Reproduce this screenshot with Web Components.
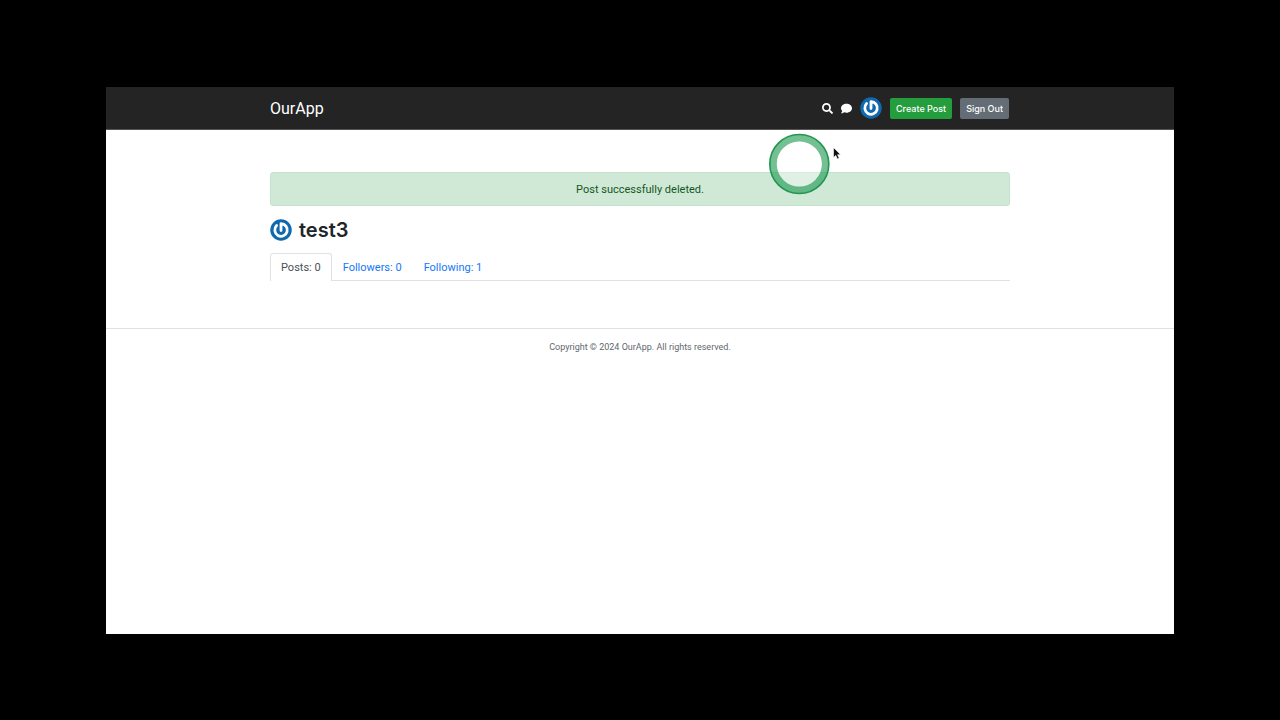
<!DOCTYPE html>
<html lang="en">
<head>
<meta charset="utf-8">
<meta name="viewport" content="width=device-width, initial-scale=1">
<title>OurApp</title>
<style>
  html { background: #000; }
  body {
    margin: 0; box-sizing: border-box; min-height: 100vh; padding: 87px 106px 86px;
    display: flex; flex-direction: column; background: #000; color: #212529;
    font: 11px/16px Roboto, "Liberation Sans", sans-serif;
  }
</style>
</head>
<body>
<our-app></our-app>
<script>
const define = (name, html) => {
  const template = document.createElement('template');
  template.innerHTML = html;
  customElements.define(name, class extends HTMLElement {
    constructor() {
      super();
      this.attachShadow({ mode: 'open' }).append(template.content.cloneNode(true));
    }
  });
};

define('user-avatar', `
  <style>
    :host { display: block; width: 22px; height: 22px; flex: none; }
    svg { display: block; width: 100%; height: 100%; }
  </style>
  <svg viewBox="0 0 44 44" aria-hidden="true">
    <circle cx="22" cy="22" r="21.5" fill="#0f69ae"/>
    <path d="M22 23V9.500A12.500 12.500 0 1 1 13.200 13.200" fill="none" stroke="#fff" stroke-width="5.600" stroke-linecap="round" stroke-linejoin="round"/>
  </svg>`);

define('app-header', `
  <style>
    :host { display: block; background: #242424; border-bottom: 1px solid #555; }
    .bar {
      max-width: 740px; height: 42px; margin: 0 auto;
      display: flex; align-items: center; justify-content: space-between;
    }
    a { color: #fff; text-decoration: none; }
    .brand { font-size: 16px; line-height: 24px; padding-top: 1px; }
    nav { display: flex; align-items: center; gap: 8px; padding-right: 1px; }
    svg { display: block; width: 11px; height: 11px; fill: #fff; }
    button {
      font: 500 9px/13px Inter, "Liberation Sans", sans-serif; color: #fff;
      height: 21px; padding: 0 6px; border: 0; border-radius: 2px;
    }
    .create { background: #249d3d; }
    .out { background: #646d75; }
  </style>
  <div class="bar">
    <a class="brand" href="#">OurApp</a>
    <nav>
      <a href="#" aria-label="Search"><svg viewBox="0 0 512 512"><path d="M505 442.7L405.3 343c-4.5-4.5-10.6-7-17-7H372c27.6-35.3 44-79.7 44-128C416 93.1 322.9 0 208 0S0 93.1 0 208s93.1 208 208 208c48.3 0 92.7-16.4 128-44v16.3c0 6.4 2.5 12.5 7 17l99.7 99.7c9.4 9.4 24.6 9.4 33.9 0l28.3-28.3c9.4-9.4 9.4-24.6.1-34zM208 336c-70.7 0-128-57.2-128-128 0-70.7 57.2-128 128-128 70.7 0 128 57.2 128 128 0 70.7-57.2 128-128 128z"/></svg></a>
      <a href="#" aria-label="Chat"><svg viewBox="0 0 512 512"><path d="M256 32C114.6 32 0 125.1 0 240c0 49.6 21.4 95 57 130.7C44.5 421.1 2.7 466 2.2 466.5c-2.2 2.3-2.8 5.7-1.5 8.7S4.8 480 8 480c66.3 0 116-31.8 140.6-51.4 32.7 12.3 69 19.4 107.4 19.4 141.4 0 256-93.1 256-208S397.4 32 256 32z"/></svg></a>
      <a href="#" aria-label="My profile"><user-avatar></user-avatar></a>
      <button class="create" type="button">Create Post</button>
      <button class="out" type="button">Sign Out</button>
    </nav>
  </div>`);

define('flash-message', `
  <style>
    :host {
      display: block; padding: 9px 8px 7px; text-align: center; color: #155724;
      background: #d0e9d7; border: 1px solid #c0e3c9; border-radius: 3px;
    }
  </style>
  <slot></slot>`);

define('profile-tabs', `
  <style>
    :host { display: block; border-bottom: 1px solid #dee2e6; }
    nav { display: flex; }
    a {
      padding: 6px 10px 4px; border: 1px solid transparent; border-bottom: 0;
      color: #1477f8; text-decoration: none;
    }
    a[aria-current] {
      color: #495057; background: #fff; border-color: #dee2e6;
      border-radius: 3px 3px 0 0; padding-bottom: 5px; margin-bottom: -1px;
    }
  </style>
  <nav>
    <a href="#" aria-current="page">Posts: 0</a>
    <a href="#">Followers: 0</a>
    <a href="#">Following: 1</a>
  </nav>`);

define('profile-page', `
  <style>
    :host { display: block; box-sizing: border-box; width: 100%; max-width: 740px; margin: 0 auto; padding: 42px 0 47px; }
    h2 {
      display: flex; align-items: center; gap: 7px; margin: 10px 0 9px;
      font: 600 20px/28px Inter, "Liberation Sans", sans-serif;
    }
  </style>
  <flash-message role="status">Post successfully deleted.</flash-message>
  <h2><user-avatar></user-avatar>test3</h2>
  <profile-tabs></profile-tabs>`);

define('app-footer', `
  <style>
    :host {
      display: block; padding: 10px; border-top: 1px solid #dee2e6; text-align: center;
      font-size: 9px; color: #5f676e;
    }
  </style>
  <footer>Copyright © 2024 OurApp. All rights reserved.</footer>`);

define('click-pointer', `
  <style>
    :host { position: absolute; top: 46px; left: calc(50% + 128px); pointer-events: none; }
    svg { display: block; }
  </style>
  <svg width="76" height="62" viewBox="0 0 76 62" aria-hidden="true">
    <circle cx="31.300" cy="31" r="26" fill="none" stroke="#1f9a50" stroke-opacity=".62" stroke-width="7"/>
    <circle cx="31.300" cy="31" r="29.5" fill="none" stroke="#219653" stroke-width="1.6"/>
    <circle cx="31.300" cy="31" r="22.5" fill="#fff" fill-opacity=".35"/>
    <path d="M65.500 14.500v10l2.300-2.100 1.600 3.600 1.800-.8-1.600-3.500h3z" fill="#111" stroke="#fff" stroke-width=".6"/>
  </svg>`);

define('our-app', `
  <style>
    :host { position: relative; flex: 1; display: flex; flex-direction: column; background: #fff; }
  </style>
  <app-header></app-header>
  <profile-page></profile-page>
  <app-footer></app-footer>
  <click-pointer></click-pointer>`);
</script>
</body>
</html>
